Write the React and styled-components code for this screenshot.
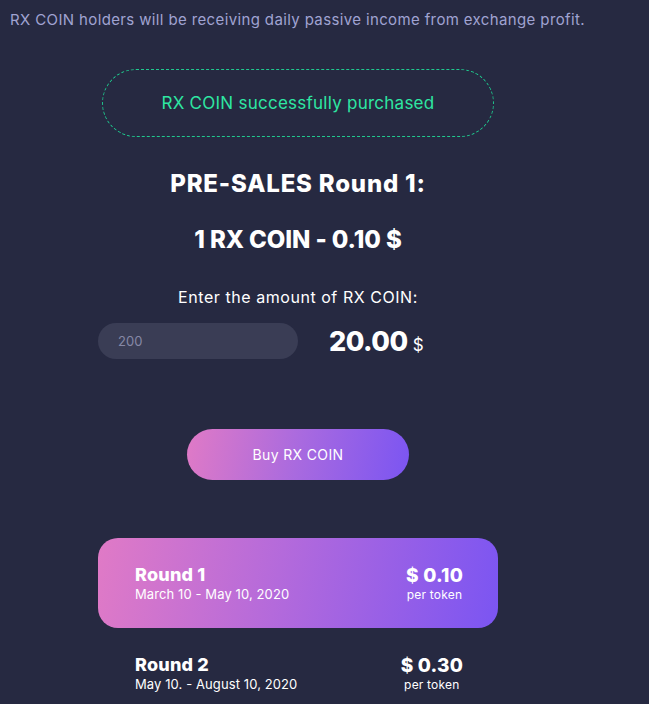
import React, { useState } from "react";
import styled, { createGlobalStyle } from "styled-components";

const GlobalStyle = createGlobalStyle`
  html, body {
    margin: 0;
    padding: 0;
    background: #262941;
  }
  body {
    font-family: Inter, "Noto Sans", sans-serif;
    color: #ffffff;
  }
`;

const Page = styled.div`
  width: 649px;
  height: 704px;
  overflow: hidden;
  background: #262941;
`;

const Intro = styled.p`
  margin: 0;
  padding: 10px 0 0 10px;
  font-size: 15px;
  line-height: 20px;
  letter-spacing: 0.37px;
  color: #a0a3d2;
`;

const Column = styled.div`
  width: 400px;
  margin-left: 98px;
  display: flex;
  flex-direction: column;
  align-items: center;
`;

const Notice = styled.div`
  margin-top: 39px;
  width: 392px;
  height: 68px;
  box-sizing: border-box;
  border: 1px dashed #1fc98e;
  border-radius: 34px;
  display: flex;
  align-items: center;
  justify-content: center;
  color: #2ee6a2;
  font-size: 17px;
  letter-spacing: 0.25px;
`;

const Title = styled.h2`
  margin: ${(p) => p.$top}px 0 0;
  font-size: 24px;
  font-weight: 800;
  line-height: 30px;
  letter-spacing: ${(p) => p.$spacing}px;
  color: #ffffff;
`;

const Label = styled.div`
  margin-top: 32px;
  font-size: 16px;
  line-height: 20px;
  letter-spacing: 0.55px;
  color: #ffffff;
`;

const AmountRow = styled.div`
  margin-top: 16px;
  width: 100%;
  display: flex;
  align-items: center;
`;

const AmountInput = styled.input`
  width: 200px;
  height: 36px;
  box-sizing: border-box;
  border: none;
  outline: none;
  border-radius: 18px;
  background: #3a3d55;
  padding: 0 20px;
  font-family: inherit;
  font-size: 13px;
  color: #ffffff;

  &::placeholder {
    color: #8688a6;
  }
`;

const Total = styled.div`
  margin-left: 31px;
  display: flex;
  align-items: baseline;
  gap: 5px;
`;

const TotalValue = styled.span`
  font-size: 27px;
  font-weight: 800;
  letter-spacing: -0.5px;
`;

const TotalCurrency = styled.span`
  font-size: 17px;
`;

const BuyButton = styled.button`
  margin-top: 70px;
  width: 222px;
  height: 51px;
  border: none;
  border-radius: 26px;
  background: linear-gradient(100deg, #e07ac6 0%, #a96adf 50%, #7b55f2 100%);
  color: #ffffff;
  font-family: inherit;
  font-size: 14px;
  letter-spacing: 0.35px;
  cursor: pointer;
`;

const Rounds = styled.div`
  margin-top: 58px;
  width: 100%;
  display: flex;
  flex-direction: column;
`;

const RoundCard = styled.div`
  height: ${(p) => (p.$active ? 90 : 58)}px;
  box-sizing: border-box;
  padding: 0 35px 0 37px;
  border-radius: 20px;
  display: flex;
  align-items: center;
  justify-content: space-between;
  background: ${(p) =>
    p.$active
      ? "linear-gradient(100deg, #e07ac6 0%, #b46adb 45%, #7b55f2 100%)"
      : "transparent"};
  margin-top: ${(p) => (p.$active ? 0 : 16)}px;
`;

const RoundInfo = styled.div`
  display: flex;
  flex-direction: column;
`;

const RoundName = styled.div`
  font-size: 18px;
  font-weight: 800;
  line-height: 22px;
  letter-spacing: 0.2px;
`;

const RoundDates = styled.div`
  font-size: 13px;
  line-height: 16px;
  letter-spacing: 0.1px;
`;

const Price = styled.div`
  display: flex;
  flex-direction: column;
  align-items: center;
`;

const PriceValue = styled.div`
  font-size: 19px;
  font-weight: 800;
  line-height: 23px;
  letter-spacing: 0.2px;
`;

const PriceUnit = styled.div`
  font-size: 12px;
  line-height: 15px;
  letter-spacing: 0.2px;
`;

const rounds = [
  { name: "Round 1", dates: "March 10 - May 10, 2020", price: "$ 0.10", active: true },
  { name: "Round 2", dates: "May 10. - August 10, 2020", price: "$ 0.30", active: false },
];

export default function App() {
  const [amount, setAmount] = useState("");
  const total = ((Number(amount) || 200) * 0.1).toFixed(2);

  return (
    <Page>
      <GlobalStyle />
      <Intro>RX COIN holders will be receiving daily passive income from exchange profit.</Intro>
      <Column>
        <Notice>RX COIN successfully purchased</Notice>
        <Title $top={32} $spacing={0.8}>PRE-SALES Round 1:</Title>
        <Title $top={26} $spacing={-0.1}>1 RX COIN - 0.10 $</Title>
        <Label>Enter the amount of RX COIN:</Label>
        <AmountRow>
          <AmountInput
            placeholder="200"
            value={amount}
            onChange={(e) => setAmount(e.target.value)}
          />
          <Total>
            <TotalValue>{total}</TotalValue>
            <TotalCurrency>$</TotalCurrency>
          </Total>
        </AmountRow>
        <BuyButton>Buy RX COIN</BuyButton>
        <Rounds>
          {rounds.map((r) => (
            <RoundCard key={r.name} $active={r.active}>
              <RoundInfo>
                <RoundName>{r.name}</RoundName>
                <RoundDates>{r.dates}</RoundDates>
              </RoundInfo>
              <Price>
                <PriceValue>{r.price}</PriceValue>
                <PriceUnit>per token</PriceUnit>
              </Price>
            </RoundCard>
          ))}
        </Rounds>
      </Column>
    </Page>
  );
}
